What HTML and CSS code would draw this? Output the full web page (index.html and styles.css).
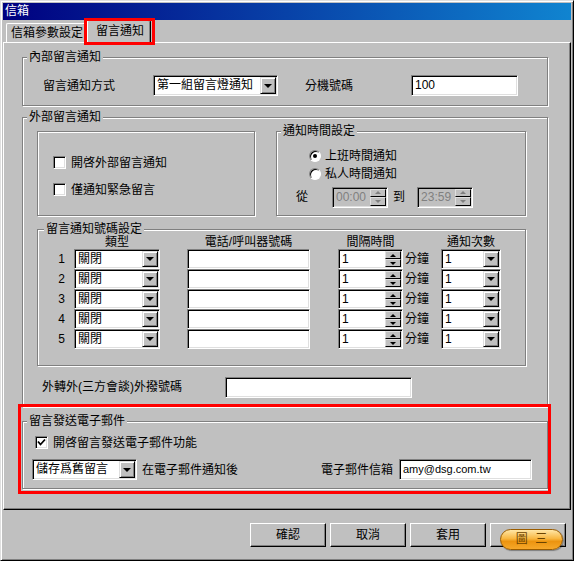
FILE: index.html
```html
<!DOCTYPE html>
<html lang="zh-Hant">
<head>
	<meta charset="UTF-8">
	<title>信箱</title>
	<link rel="stylesheet" href="styles.css">
</head>
<body>
	<div class="window">
		<div class="titlebar">信箱</div>

		<div class="tabs">
			<div class="tab">信箱參數設定</div>
			<div class="tab active">留言通知</div>
		</div>

		<div class="panel">
			<!-- 內部留言通知 -->
			<div class="group grp-inner">
				<span class="legend">內部留言通知</span>
				<div class="row">
					<span class="lbl-mode">留言通知方式</span>
					<div class="combo w-mode"><span class="val">第一組留言燈通知</span><span class="drop"></span></div>
					<span class="lbl-ext">分機號碼</span>
					<div class="field w-ext">100</div>
				</div>
			</div>

			<!-- 外部留言通知 -->
			<div class="group grp-outer">
				<span class="legend">外部留言通知</span>
				<div class="top-boxes">
					<div class="group box-opts">
						<div class="check-row"><span class="check"></span>開啓外部留言通知</div>
						<div class="check-row"><span class="check"></span>僅通知緊急留言</div>
					</div>
					<div class="group box-time">
						<span class="legend">通知時間設定</span>
						<div class="radio-row"><span class="radio on"></span>上班時間通知</div>
						<div class="radio-row"><span class="radio"></span>私人時間通知</div>
						<div class="time-row">
							<span>從</span>
							<div class="spin disabled w-time t-from"><span class="val">00:00</span><span class="arrows"><i class="up"></i><i class="dn"></i></span></div>
							<span class="to">到</span>
							<div class="spin disabled w-time t-to"><span class="val">23:59</span><span class="arrows"><i class="up"></i><i class="dn"></i></span></div>
						</div>
					</div>
				</div>

				<div class="group grp-numbers">
					<span class="legend">留言通知號碼設定</span>
					<div class="num-head">
						<span class="c-num"></span>
						<span class="c-type">類型</span>
						<span class="c-phone">電話/呼叫器號碼</span>
						<span class="c-int">間隔時間</span>
						<span class="c-unit"></span>
						<span class="c-count">通知次數</span>
					</div>
					<div class="num-row">
						<span class="c-num">1</span>
						<div class="combo c-type"><span class="val">關閉</span><span class="drop"></span></div>
						<div class="field c-phone"></div>
						<div class="spin c-int"><span class="val">1</span><span class="arrows"><i class="up"></i><i class="dn"></i></span></div>
						<span class="c-unit">分鐘</span>
						<div class="combo c-count"><span class="val">1</span><span class="drop"></span></div>
					</div>
					<div class="num-row">
						<span class="c-num">2</span>
						<div class="combo c-type"><span class="val">關閉</span><span class="drop"></span></div>
						<div class="field c-phone"></div>
						<div class="spin c-int"><span class="val">1</span><span class="arrows"><i class="up"></i><i class="dn"></i></span></div>
						<span class="c-unit">分鐘</span>
						<div class="combo c-count"><span class="val">1</span><span class="drop"></span></div>
					</div>
					<div class="num-row">
						<span class="c-num">3</span>
						<div class="combo c-type"><span class="val">關閉</span><span class="drop"></span></div>
						<div class="field c-phone"></div>
						<div class="spin c-int"><span class="val">1</span><span class="arrows"><i class="up"></i><i class="dn"></i></span></div>
						<span class="c-unit">分鐘</span>
						<div class="combo c-count"><span class="val">1</span><span class="drop"></span></div>
					</div>
					<div class="num-row">
						<span class="c-num">4</span>
						<div class="combo c-type"><span class="val">關閉</span><span class="drop"></span></div>
						<div class="field c-phone"></div>
						<div class="spin c-int"><span class="val">1</span><span class="arrows"><i class="up"></i><i class="dn"></i></span></div>
						<span class="c-unit">分鐘</span>
						<div class="combo c-count"><span class="val">1</span><span class="drop"></span></div>
					</div>
					<div class="num-row">
						<span class="c-num">5</span>
						<div class="combo c-type"><span class="val">關閉</span><span class="drop"></span></div>
						<div class="field c-phone"></div>
						<div class="spin c-int"><span class="val">1</span><span class="arrows"><i class="up"></i><i class="dn"></i></span></div>
						<span class="c-unit">分鐘</span>
						<div class="combo c-count"><span class="val">1</span><span class="drop"></span></div>
					</div>
				</div>

				<div class="transfer-row">
					<span class="lbl-transfer">外轉外(三方會談)外撥號碼</span>
					<div class="field w-transfer"></div>
				</div>
			</div>

			<!-- 留言發送電子郵件 -->
			<div class="group grp-mail">
				<span class="legend">留言發送電子郵件</span>
				<div class="check-row mail-check">
					<span class="check checked"><svg width="9" height="9" viewBox="0 0 9 9"><path d="M1 3.5 L3.5 6.5 L8 1.5" stroke="#000" stroke-width="1.8" fill="none"/></svg></span>開啓留言發送電子郵件功能
				</div>
				<div class="mail-row">
					<div class="combo w-save"><span class="val">儲存爲舊留言</span><span class="drop"></span></div>
					<span class="after">在電子郵件通知後</span>
					<span class="mail-lbl">電子郵件信箱</span>
					<div class="field w-mail">amy@dsg.com.tw</div>
				</div>
			</div>
		</div>

		<div class="buttons">
			<button class="btn">確認</button>
			<button class="btn">取消</button>
			<button class="btn">套用</button>
			<button class="btn last"><span class="badge">圖 三</span></button>
		</div>
	</div>
</body>
</html>
```

FILE: styles.css
```css
*{margin:0;padding:0;box-sizing:border-box}
body{
	width:574px;
	height:561px;
	overflow:hidden;
	background:#c0c0c0;
	font:12px/14px "Liberation Sans","Noto Sans CJK TC",sans-serif;
	color:#000;
}

/* 視窗外框 */
.window{
	width:574px;
	height:561px;
	border:1px solid;
	border-color:#dfdfdf #000 #000 #dfdfdf;
	box-shadow:inset 1px 1px #fff, inset -1px -1px #808080;
	padding:2px;
	display:flex;
	flex-direction:column;
}
.titlebar{
	height:17px;
	line-height:17px;
	padding-left:2px;
	color:#fff;
	background:linear-gradient(to right,#000080,#1084d0);
}

/* 頁籤 */
.tabs{
	height:22px;
	display:flex;
	align-items:flex-end;
	padding-left:3px;
}
.tab{
	height:19px;
	line-height:18px;
	width:80px;
	padding-left:4px;
	border:1px solid;
	border-bottom:none;
	border-color:#fff #000 #000 #fff;
	box-shadow:inset -1px 0 #808080;
	border-radius:2px 2px 0 0;
}
.tab.active{
	position:relative;
	z-index:2;
	width:64px;
	height:23px;
	line-height:20px;
	margin-bottom:-1px;
	margin-left:1px;
	padding-left:8px;
	background:#c0c0c0;
}
.tab.active::after{
	content:"";
	position:absolute;
	left:-4px;
	top:-3px;
	right:-5px;
	bottom:-2px;
	border:3px solid #f00;
}

.panel{
	position:relative;
	width:568px;
	height:468px;
	border:1px solid;
	border-color:#fff #000 #000 #fff;
	box-shadow:inset -1px -1px #808080;
	padding:14px 0 0 18px;
}

/* 群組框 */
.group{
	position:relative;
	border:1px solid #808080;
	box-shadow:inset 1px 1px #fff, 1px 1px #fff;
}
.group .legend{
	position:absolute;
	top:-7px;
	left:4px;
	padding:0 2px;
	line-height:12px;
	background:#c0c0c0;
	white-space:nowrap;
}

.grp-inner{
	width:526px;
	height:49px;
	padding:17px 0 0 20px;
}
.row{
	display:flex;
	align-items:center;
	height:21px;
}
.lbl-mode{width:110px}
.w-mode{width:125px}
.lbl-ext{margin-left:27px;width:106px}
.w-ext{width:107px}

.grp-outer{
	margin-top:11px;
	width:526px;
	height:290px;
	padding:13px 0 0 14px;
}
.top-boxes{display:flex}
.box-opts{
	width:218px;
	height:85px;
	padding:24px 0 0 15px;
}
.check-row{
	display:flex;
	align-items:center;
	gap:5px;
	height:13px;
	white-space:nowrap;
}
.check-row + .check-row{margin-top:14px}

.box-time{
	margin-left:21px;
	width:250px;
	height:85px;
	padding:15px 0 0 19px;
}
.radio-row{
	display:flex;
	align-items:center;
	gap:4px;
	height:18px;
	margin-left:13px;
}
.time-row{
	display:flex;
	align-items:center;
	height:20px;
	margin-top:4px;
}
.w-time{width:56px}
.t-from{margin-left:24px}
.to{margin-left:5px}
.t-to{margin-left:12px}

/* 號碼設定表 */
.grp-numbers{
	margin-top:13px;
	width:489px;
	height:137px;
	padding-top:5px;
}
.grp-numbers .legend{left:6px}
.num-head,.num-row{display:flex}
.num-head{height:14px;line-height:14px;text-align:center}
.num-row{height:20px;align-items:center}
.c-num{width:36px;text-align:right;padding-right:9px}
.c-type{width:86px}
.c-phone{width:123px;margin-left:27px}
.c-int{width:65px;margin-left:28px}
.c-unit{width:24px;margin-left:2px}
.c-count{width:60px;margin-left:12px}
.num-row .combo,.num-row .field,.num-row .spin{height:20px}

.transfer-row{
	display:flex;
	align-items:center;
	height:20px;
	margin-top:11px;
}
.lbl-transfer{margin-left:5px;width:183px}
.w-transfer{width:187px;height:20px}

/* 電子郵件 */
.grp-mail{
	margin-top:14px;
	width:526px;
	height:68px;
	padding:14px 0 0 9px;
}
.grp-mail::after{
	content:"";
	position:absolute;
	left:-5px;
	top:-18px;
	right:-4px;
	bottom:-6px;
	border:3px solid #f00;
}
.mail-check{margin-left:3px}
.mail-row{
	display:flex;
	align-items:center;
	height:21px;
	margin-top:10px;
	padding-right:15px;
}
.w-save{width:105px}
.after{margin-left:5px}
.mail-lbl{margin-left:auto;margin-right:6px}
.w-mail{width:133px;font-size:11px}

/* 控制項 */
.field,.combo,.spin{
	height:21px;
	background:#fff;
	border:1px solid;
	border-color:#808080 #fff #fff #808080;
	box-shadow:inset 1px 1px #000, inset -1px -1px #dfdfdf;
	white-space:nowrap;
}
.field{padding:0 3px;line-height:19px}
.combo,.spin{display:flex;padding:1px}
.val{padding-left:2px;line-height:17px}
.combo .val,.spin .val{align-self:center}
.drop{
	margin-left:auto;
	width:16px;
	display:flex;
	align-items:center;
	justify-content:center;
	background:#c0c0c0;
	border:1px solid;
	border-color:#dfdfdf #000 #000 #dfdfdf;
	box-shadow:inset 1px 1px #fff, inset -1px -1px #808080;
}
.drop::before{
	content:"";
	border-style:solid;
	border-width:4px 4px 0;
	border-color:#000 transparent transparent;
}
.arrows{
	margin-left:auto;
	width:16px;
	display:flex;
	flex-direction:column;
}
.arrows i{
	flex:1;
	display:flex;
	align-items:center;
	justify-content:center;
	background:#c0c0c0;
	border:1px solid;
	border-color:#dfdfdf #000 #000 #dfdfdf;
}
.arrows .up::before{
	content:"";
	border-style:solid;
	border-width:0 3px 3px;
	border-color:transparent transparent #000;
}
.arrows .dn::before{
	content:"";
	border-style:solid;
	border-width:3px 3px 0;
	border-color:#000 transparent transparent;
}
.spin.disabled{background:#c0c0c0;color:#808080}
.spin.disabled .arrows .up::before{border-bottom-color:#808080}
.spin.disabled .arrows .dn::before{border-top-color:#808080}

.check{
	width:13px;
	height:13px;
	flex:none;
	display:flex;
	align-items:center;
	justify-content:center;
	background:#fff;
	border:1px solid;
	border-color:#808080 #fff #fff #808080;
	box-shadow:inset 1px 1px #000, inset -1px -1px #dfdfdf;
}
.radio{
	position:relative;
	width:12px;
	height:12px;
	flex:none;
	border-radius:50%;
	background:#fff;
	border:1px solid;
	border-color:#808080 #fff #fff #808080;
	box-shadow:inset 1px 1px #000;
}
.radio.on::after{
	content:"";
	position:absolute;
	left:3px;
	top:3px;
	width:4px;
	height:4px;
	border-radius:50%;
	background:#000;
}

/* 按鈕列 */
.buttons{
	display:flex;
	justify-content:flex-end;
	gap:4px;
	margin-top:13px;
	padding-right:5px;
}
.btn{
	position:relative;
	width:76px;
	height:24px;
	font:inherit;
	color:#000;
	background:#c0c0c0;
	border:1px solid;
	border-color:#fff #000 #000 #fff;
	box-shadow:inset -1px -1px #808080;
}
.badge{
	position:absolute;
	left:9px;
	top:5px;
	width:63px;
	height:21px;
	line-height:19px;
	text-align:center;
	word-spacing:4px;
	color:#6b4300;
	border:1px solid #9a5c00;
	border-radius:11px;
	background:linear-gradient(#ffe6a6,#f8b742 45%,#ec9410 60%,#f6a82a);
	box-shadow:1px 1px 1px rgba(0,0,0,.35);
}
```
